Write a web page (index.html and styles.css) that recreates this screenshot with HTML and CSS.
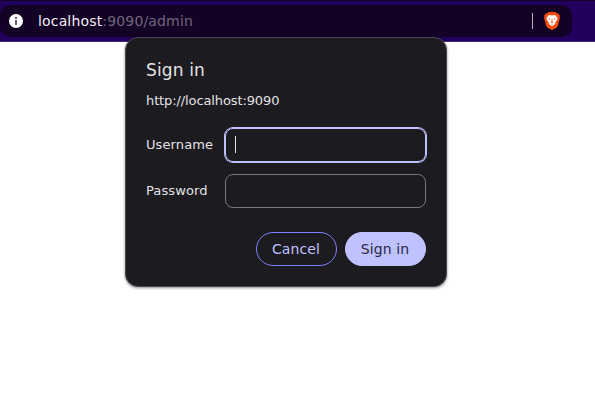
FILE: index.html
```
<!DOCTYPE html>
<html lang="en">
<head>
<meta charset="utf-8">
<title>Sign in</title>
<link rel="stylesheet" href="styles.css">
</head>
<body>
<header class="toolbar">
  <div class="address">
    <svg class="info" width="14" height="14" viewBox="0 0 14 14"><circle cx="7" cy="7" r="7" fill="#fff"/><path d="M6 3h2v2H6zM6 6h2v5H6z" fill="#6b6078"/></svg>
    <span class="url"><span class="host">localhost</span>:9090/admin</span>
    <span class="divider"></span>
    <svg class="shield" width="16" height="18" viewBox="0 0 16 18"><path d="M4.7 0h6.6l1.4 1.5 1.5-.1L16 4l-.5 1.6.3 1-2 7.3-1.4 1.8L8 18l-4.4-2.3-1.4-1.8-2-7.3.3-1L0 4l1.8-2.6 1.5.1z" fill="#fb4b12"/><path d="M5 3l3 .6L11 3l2.6 3.1-.5 2-2 2.5.4 1.2-3.5 2.5-3.5-2.5.4-1.2-2-2.5-.5-2z" fill="#fff"/><path d="M4 6.2l2.5.5-.3 1L4.5 7.3zM12 6.2l-2.5.5.3 1 1.7-.4zM7.6 7h.8l.1 2.5 1.2.7L8 11.2l-1.7-1 1.2-.7zM5.9 11.5L8 12.3l2.1-.8L8 12.8z" fill="#fb6b38"/></svg>
  </div>
</header>
<form class="dialog">
  <h1 class="title">Sign in</h1>
  <p class="origin">http://localhost:9090</p>
  <div class="fields">
    <span class="label">Username</span>
    <div class="field focused"><span class="caret"></span></div>
    <span class="label">Password</span>
    <div class="field"></div>
  </div>
  <div class="actions">
    <button class="button" type="button">Cancel</button>
    <button class="button primary" type="button">Sign in</button>
  </div>
</form>
</body>
</html>
```
FILE: styles.css
```
* { box-sizing: border-box; }
body {
  margin: 0;
  height: 419px;
  overflow: hidden;
  background: #fff;
  font: 13px "DejaVu Sans", sans-serif;
}
.toolbar {
  height: 42px;
  padding-top: 4px;
  background: #22005d;
  border-top: 1px solid #11002b;
  border-bottom: 1px solid #432078;
}
.address {
  width: 572px;
  height: 32px;
  display: flex;
  align-items: center;
  padding: 0 12px 0 9px;
  background: #130225;
  border-radius: 10px;
}
.url {
  flex: 1;
  margin-left: 15px;
  color: #71667c;
  font-size: 14px;
  letter-spacing: .16px;
}
.host { color: #f1eef4; }
.divider {
  width: 1px;
  height: 16px;
  margin-right: 11px;
  background: #b6b0bd;
}
.dialog {
  position: absolute;
  left: 125px;
  top: 37px;
  width: 322px;
  height: 250px;
  padding: 20px;
  background: #1c1b1f;
  color: #e3e2e6;
  border: 1px solid #49484c;
  border-radius: 13px;
  box-shadow: 0 1px 3px rgba(0, 0, 0, .45);
}
.title {
  margin: 0;
  font-size: 17px;
  line-height: 24px;
  font-weight: 400;
  letter-spacing: .14px;
}
.origin {
  margin: 9px 0 17px;
  line-height: 20px;
  letter-spacing: -.11px;
}
.fields {
  display: grid;
  grid-template-columns: 79px 201px;
  row-gap: 12px;
  align-items: center;
}
.label {
  padding-bottom: 2px;
  letter-spacing: .1px;
}
.field {
  height: 34px;
  display: flex;
  align-items: center;
  padding-left: 9px;
  border: 1px solid #77767a;
  border-radius: 8px;
}
.field.focused {
  border-color: #c0c1ff;
  box-shadow: 0 0 0 1px #c0c1ff;
}
.caret {
  width: 1px;
  height: 17px;
  margin-bottom: 1px;
  background: #e3e2e6;
}
.actions {
  display: flex;
  justify-content: flex-end;
  gap: 8px;
  margin-top: 24px;
}
.button {
  width: 81px;
  height: 34px;
  padding: 0 1px 0 0;
  border: 1px solid #8080ff;
  border-radius: 17px;
  background: transparent;
  color: #c0c1ff;
  font: 14px "DejaVu Sans", sans-serif;
  letter-spacing: .12px;
}
.button.primary {
  background: #c0c1ff;
  border-color: #c0c1ff;
  color: #292a42;
}
```
